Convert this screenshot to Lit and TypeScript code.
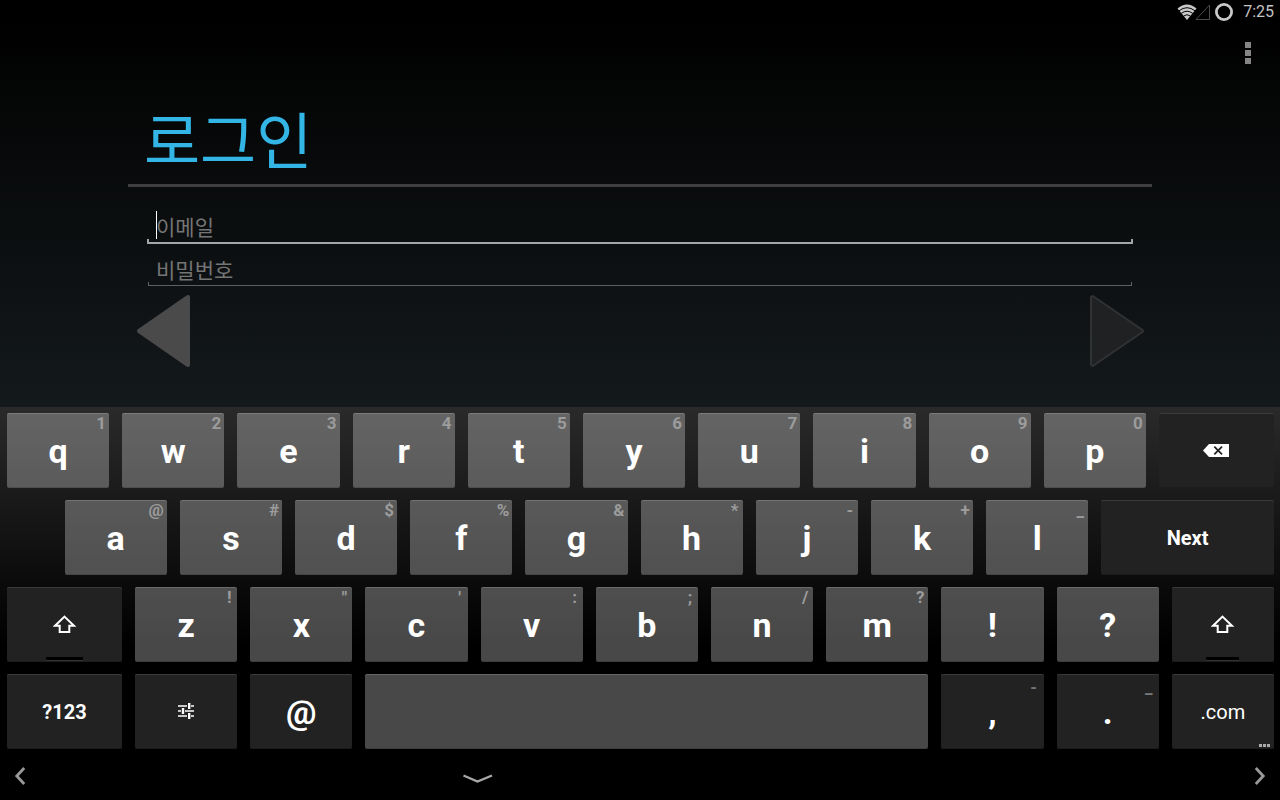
import { LitElement, html, css, svg, nothing } from "lit";
import { customElement, property } from "lit/decorators.js";
import { classMap } from "lit/directives/class-map.js";

type KeyDef = {
  label?: string;
  hint?: string;
  icon?: "shift" | "delete" | "settings";
  name?: string;
  span?: number;
  kind?: "light" | "dark";
  text?: "letter" | "action" | "plain";
  low?: boolean;
  bar?: boolean;
  more?: boolean;
  gap?: boolean;
};

const letters = (chars: string, hints: string): KeyDef[] =>
  [...chars].map((label, i) => ({ label, hint: hints[i]?.trim() }));

// Spans are percentages of the keyboard width; every row adds up to 100.
const ROWS: KeyDef[][] = [
  [
    ...letters("qwertyuiop", "1234567890"),
    { icon: "delete", name: "Delete", kind: "dark", span: 10 },
  ],
  [
    { gap: true, span: 4.5 },
    ...letters("asdfghjkl", "@#$%&*-+_"),
    { label: "Next", kind: "dark", text: "action", span: 14.5 },
  ],
  [
    { icon: "shift", name: "Shift", kind: "dark", span: 10, bar: true },
    ...letters("zxcvbnm!?", "!\"':;/?"),
    { icon: "shift", name: "Shift", kind: "dark", bar: true },
  ],
  [
    { label: "?123", kind: "dark", text: "action", span: 10 },
    { icon: "settings", name: "Settings", kind: "dark" },
    { label: "@", kind: "dark" },
    { name: "Space", span: 45 },
    { label: ",", hint: "-", kind: "dark", low: true },
    { label: ".", hint: "_", kind: "dark", low: true },
    { label: ".com", kind: "dark", text: "plain", more: true },
  ],
];

const ICONS = {
  shift: svg`<svg width="24" height="20" viewBox="0 0 24 20" fill="none" stroke="#fff" stroke-width="2">
    <path d="M11.5 1.6 L21 10.8 H16.3 V17 H6.7 V10.8 H2 Z"/></svg>`,
  delete: svg`<svg width="26" height="14" viewBox="0 0 26 14">
    <path d="M0 6.5 L6 0 H26 V13 H6 Z" fill="#fff"/>
    <path d="M11.3 2.7 L19 10.3 M19 2.7 L11.3 10.3" stroke="#222" stroke-width="1.8" fill="none"/></svg>`,
  settings: svg`<svg width="16" height="17" viewBox="0 0 16 17" fill="#c8c8c8">
    <path d="M0 2h9v2H0z M13 2h3v2h-3z M0 7h3v2H0z M7 7h9v2H7z M0 12h9v2H0z M13 12h3v2h-3z"/>
    <path fill="#fff" d="M10 0h2.4v6H10z M3.8 5h2.4v6H3.8z M10 10h2.4v6H10z"/></svg>`,
};

@customElement("key-cap")
class KeyCap extends LitElement {
  @property({ attribute: false }) def: KeyDef = {};

  static styles = css`
    :host {
      display: block;
      box-sizing: border-box;
      padding: 0 6px 0 7px;
    }
    .key {
      position: relative;
      display: flex;
      align-items: center;
      justify-content: center;
      box-sizing: border-box;
      width: 100%;
      height: 75px;
      margin: 0;
      padding: 0;
      border: 0;
      border-radius: 2px;
      color: #fff;
      font-family: Roboto, sans-serif;
      font-weight: 700;
      font-size: 34px;
      line-height: 40px;
    }
    .light {
      background: rgba(240, 240, 240, 0.3);
      box-shadow: inset 0 1px rgba(255, 255, 255, 0.16),
        inset 0 -1px rgba(0, 0, 0, 0.14);
    }
    .dark {
      background: #222;
      box-shadow: inset 0 1px #3a3a3a, inset 0 -1px #1c1c1c;
    }
    .action {
      font-size: 20px;
    }
    .plain {
      font-size: 20px;
      font-weight: 400;
    }
    .hint {
      position: absolute;
      top: 0;
      right: 3px;
      min-width: 10px;
      text-align: center;
      color: #9c9c9c;
      font-size: 17px;
      line-height: 20px;
    }
    .low {
      top: 3px;
      right: 5px;
      color: #777;
    }
    .bar {
      position: absolute;
      bottom: 1px;
      left: 50%;
      width: 32%;
      height: 3px;
      margin-left: -16%;
      background: #000;
      border-bottom: 1px solid #333;
    }
    .more {
      position: absolute;
      right: 4px;
      bottom: 2px;
      display: flex;
      gap: 1px;
    }
    .more i {
      width: 3px;
      height: 3px;
      background: #aaa;
    }
    svg {
      display: block;
    }
  `;

  render() {
    const d = this.def;
    return html`<button
      type="button"
      class=${classMap({
        key: true,
        light: d.kind !== "dark",
        dark: d.kind === "dark",
        action: d.text === "action",
        plain: d.text === "plain",
      })}
      aria-label=${d.name ?? nothing}
    >
      ${d.icon ? ICONS[d.icon] : html`<span>${d.label}</span>`}
      ${d.hint
        ? html`<span class=${classMap({ hint: true, low: !!d.low })}>${d.hint}</span>`
        : nothing}
      ${d.bar ? html`<span class="bar"></span>` : nothing}
      ${d.more ? html`<span class="more"><i></i><i></i><i></i></span>` : nothing}
    </button>`;
  }
}

@customElement("soft-keyboard")
class SoftKeyboard extends LitElement {
  static styles = css`
    :host {
      display: flex;
      flex-direction: column;
      gap: 12px;
      padding: 6px 0 3px;
      background: linear-gradient(#2a2a2a 0, #1a1a1a 90px, #0a0a0a 180px, #000 240px);
    }
    .row {
      display: flex;
    }
  `;

  render() {
    return ROWS.map(
      (row) => html`<div class="row">
        ${row.map((k) =>
          k.gap
            ? html`<div style="width:${k.span}%"></div>`
            : html`<key-cap .def=${k} style="width:${k.span ?? 9}%"></key-cap>`
        )}
      </div>`
    );
  }
}

@customElement("app-root")
class AppRoot extends LitElement {
  static styles = css`
    :host {
      display: flex;
      flex-direction: column;
      min-height: 100vh;
      background: #000;
      font-family: Roboto, "Noto Sans CJK KR", sans-serif;
    }
    button {
      display: block;
      margin: 0;
      padding: 0;
      border: 0;
      background: none;
    }
    svg {
      display: block;
    }
    .screen {
      flex: 1;
      background: linear-gradient(#000 0, #040505 60px, #14191c 100%);
    }
    .status {
      display: flex;
      align-items: center;
      justify-content: flex-end;
      height: 24px;
      padding: 0 6px 1px 0;
      background: #000;
      color: #c4c4c4;
      font-size: 16px;
      line-height: 24px;
    }
    .time {
      margin-left: 9px;
    }
    .ring {
      margin-left: 4px;
    }
    .actions {
      display: flex;
      justify-content: flex-end;
      padding: 17px 29px 0 0;
    }
    .form {
      margin: 0 10%;
    }
    .title {
      margin: 0;
      padding: 29px 16px 0;
      height: 91px;
      color: #33b5e5;
      font-family: "Noto Sans CJK KR", sans-serif;
      font-weight: 400;
      font-size: 61px;
      line-height: 90px;
      border-bottom: 3px solid #3f3f3f;
    }
    .fields {
      padding: 14px 19px 0;
    }
    .field {
      position: relative;
      height: 43px;
      box-sizing: border-box;
    }
    .field input {
      display: block;
      box-sizing: border-box;
      width: 100%;
      height: 41px;
      margin: 0;
      padding: 6px 9px 0;
      border: 0;
      outline: 0;
      background: none;
      color: #fff;
      font-family: "Noto Sans CJK KR", sans-serif;
      font-size: 21px;
    }
    .field label {
      position: absolute;
      left: 9px;
      top: 10px;
      color: #757575;
      font-family: "Noto Sans CJK KR", sans-serif;
      font-size: 21px;
      line-height: 30px;
      pointer-events: none;
    }
    .field input:not(:placeholder-shown) + label {
      visibility: hidden;
    }
    .line {
      position: absolute;
      left: 0;
      right: 0;
      bottom: 0;
      height: 3px;
      border: 2px solid #a3a6a8;
      border-top: 0;
    }
    .second .line {
      left: 1px;
      right: 1px;
      bottom: 1px;
      border-width: 0 1px 1px;
      border-color: #5d5f62;
    }
    .caret {
      position: absolute;
      left: 9px;
      top: 10px;
      width: 1px;
      height: 28px;
      background: #fff;
    }
    .pager {
      display: flex;
      justify-content: space-between;
      padding: 7px 8px 0;
    }
    .nav {
      display: grid;
      grid-template-columns: 40px 35fr 13fr 40px;
      place-items: center;
      height: 48px;
    }
    .nav .hide {
      padding-top: 6px;
    }
    .nav .next {
      grid-column: 4;
    }
  `;

  render() {
    return html`
      <header class="status">
        <svg width="34" height="18" viewBox="0 0 34 18">
          <path d="M1.5 5.5 Q11 -2.5 20.5 5.5 L11 17 Z" fill="#c8c8c8"/>
          <path d="M3 7.8 Q11 1.6 19 7.8 M5.2 10.4 Q11 6 16.8 10.4 M7.6 13 Q11 10.4 14.4 13"
            fill="none" stroke="#000" stroke-width="1"/>
          <path d="M20 16.5 H33.5 V2 Z" fill="none" stroke="#4a4a4a"/>
        </svg>
        <svg class="ring" width="20" height="20" viewBox="0 0 20 20">
          <circle cx="10" cy="10" r="7.6" fill="none" stroke="#c8c8c8" stroke-width="2.8"/>
        </svg>
        <span class="time">7:25</span>
      </header>
      <main class="screen">
        <div class="actions">
          <button type="button" aria-label="More options">
            <svg width="6" height="22" viewBox="0 0 6 22" fill="#858585">
              <path d="M0 0h6v6H0z M0 8h6v6H0z M0 16h6v6H0z"/>
            </svg>
          </button>
        </div>
        <form class="form">
          <h1 class="title">로그인</h1>
          <div class="fields">
            <div class="field">
              <input id="email" type="email" placeholder=" " />
              <label for="email">이메일</label>
              <span class="line"></span>
              <span class="caret"></span>
            </div>
            <div class="field second">
              <input id="password" type="password" placeholder=" " />
              <label for="password">비밀번호</label>
              <span class="line"></span>
            </div>
          </div>
          <div class="pager">
            <button type="button" aria-label="Back">
              <svg width="55" height="74" viewBox="0 0 55 74">
                <path d="M3 37 L52 3 V71 Z" fill="#4a4a4b" stroke="#4a4a4b" stroke-width="4" stroke-linejoin="round"/>
              </svg>
            </button>
            <button type="button" aria-label="Forward">
              <svg width="55" height="74" viewBox="0 0 55 74">
                <path d="M2 4 Q2 1.5 4.5 2.5 L53.5 36 Q54.5 37 53.5 38 L4.5 71.5 Q2 72.5 2 70 Z" fill="#202122" stroke="#303233" stroke-width="2" stroke-linejoin="round"/>
              </svg>
            </button>
          </div>
        </form>
      </main>
      <soft-keyboard></soft-keyboard>
      <nav class="nav">
        <button type="button" aria-label="Cursor left">
          <svg width="12" height="20" viewBox="0 0 12 20" fill="none" stroke="#999" stroke-width="2.8">
            <path d="M10.2 2 L2.8 10 L10.2 18"/>
          </svg>
        </button>
        <button type="button" class="hide" aria-label="Hide keyboard">
          <svg width="30" height="10" viewBox="0 0 30 10" fill="none" stroke="#a8a8a8" stroke-width="2.4">
            <path d="M0.5 1.5 L14.5 7.5 L29 1.5"/>
          </svg>
        </button>
        <button type="button" class="next" aria-label="Cursor right">
          <svg width="12" height="20" viewBox="0 0 12 20" fill="none" stroke="#999" stroke-width="2.8">
            <path d="M1.8 2 L9.2 10 L1.8 18"/>
          </svg>
        </button>
      </nav>
    `;
  }
}
